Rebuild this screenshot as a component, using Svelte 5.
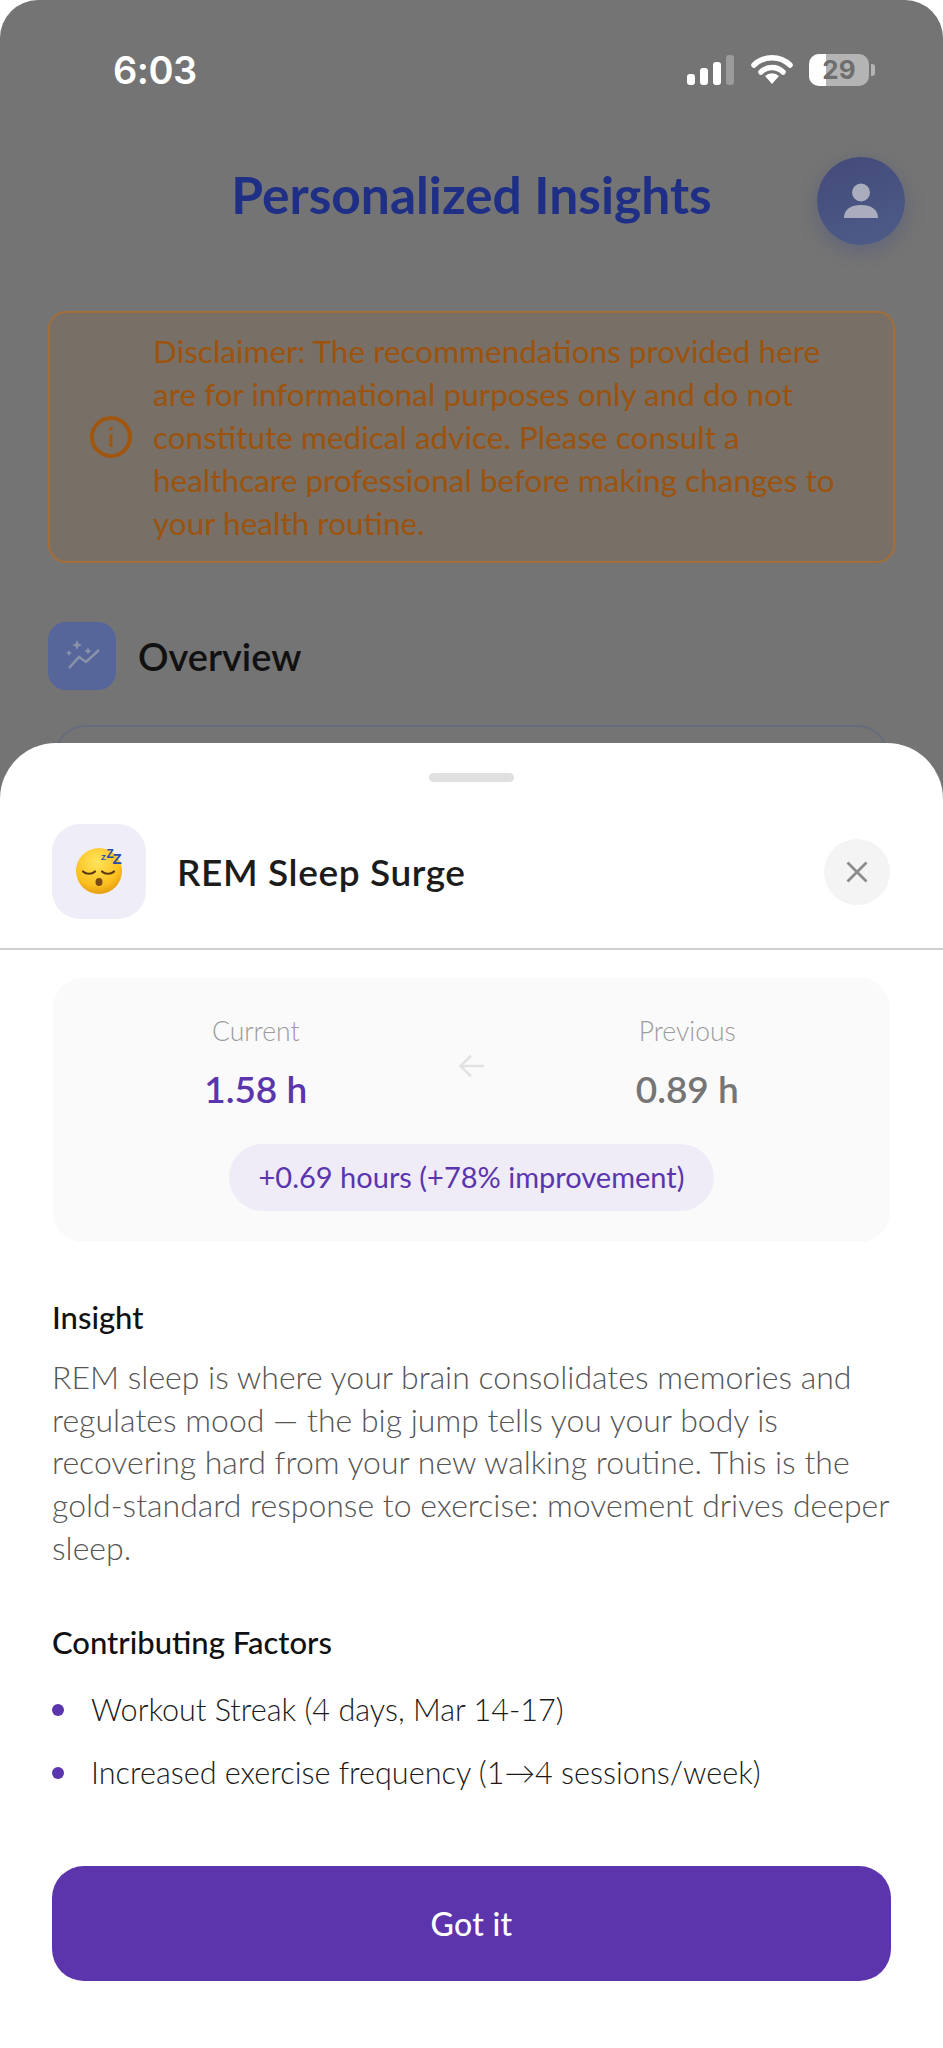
<script lang="ts">
  const disclaimer = 'Disclaimer: The recommendations provided here are for informational purposes only and do not constitute medical advice. Please consult a healthcare professional before making changes to your health routine.';
  const insight = 'REM sleep is where your brain consolidates memories and regulates mood — the big jump tells you your body is recovering hard from your new walking routine. This is the gold-standard response to exercise: movement drives deeper sleep.';
  const factors = ['Workout Streak (4 days, Mar 14-17)', 'Increased exercise frequency (1→4 sessions/week)'];
</script>

<div class="phone">
  <div class="screen">
    <div class="status">
      <span class="time">6:03</span>
      <div class="status-icons">
        <svg width="47" height="30" viewBox="0 0 47 30">
          <rect x="0" y="19" width="8" height="11" rx="3" fill="#fff" />
          <rect x="13" y="13" width="8" height="17" rx="3" fill="#fff" />
          <rect x="26" y="7" width="8" height="23" rx="3" fill="#fff" />
          <rect x="39" y="0" width="8" height="30" rx="3" fill="#9b9b9b" />
        </svg>
        <svg width="42" height="30" viewBox="0 0 42 30">
          <path d="M3 10a26 26 0 0 1 36 0M10 17a16 16 0 0 1 22 0" fill="none" stroke="#fff" stroke-width="5.5" stroke-linecap="round" />
          <path d="M14 21a10 10 0 0 1 14 0l-7 8z" fill="#fff" />
        </svg>
        <div class="battery">
          <span class="battery-fill"></span>
          <span class="battery-num">29</span>
          <span class="battery-cap"></span>
        </div>
      </div>
    </div>

    <div class="top">
      <h1>Personalized Insights</h1>
      <div class="avatar">
        <svg width="36" height="36" viewBox="0 0 36 36">
          <circle cx="18" cy="9.500" r="9" fill="#a9adbd" />
          <path d="M1 35c0-9 7-13 17-13s17 4 17 13z" fill="#a9adbd" />
        </svg>
      </div>
    </div>

    <div class="notice">
      <svg class="notice-icon" width="42" height="42" viewBox="0 0 42 42">
        <circle cx="21" cy="21" r="19" fill="none" stroke="#a0560f" stroke-width="4" />
        <rect x="19.5" y="18" width="3" height="13" fill="#a0560f" />
        <rect x="19.5" y="11" width="3" height="3.500" fill="#a0560f" />
      </svg>
      <p>{disclaimer}</p>
    </div>

    <div class="overview">
      <div class="overview-icon">
        <svg width="40" height="40" viewBox="0 0 40 40">
          <path d="M7 32l10-11 7 5 13-12" fill="none" stroke="#8a92aa" stroke-width="2.500" />
          <path d="M15 4l1.500 3.500L20 9l-3.500 1.500L15 14l-1.500-3.500L10 9l3.500-1.500zM26 11.500l1.200 2.300 2.300 1.200-2.300 1.200-1.200 2.300-1.200-2.300-2.300-1.200 2.300-1.200zM7 14l1 2 2 1-2 1-1 2-1-2-2-1 2-1z" fill="#8a92aa" />
        </svg>
      </div>
      <span>Overview</span>
    </div>

    <div class="peek"></div>
  </div>

  <div class="sheet">
    <div class="handle"></div>
    <div class="sheet-head">
      <div class="emoji-tile">
        <svg width="50" height="50" viewBox="0 0 50 50">
          <defs>
            <radialGradient id="face" cx="0.45" cy="0.3" r="0.8">
              <stop offset="0" stop-color="#ffe55c" />
              <stop offset="0.65" stop-color="#fbbf1e" />
              <stop offset="1" stop-color="#d98a0c" />
            </radialGradient>
          </defs>
          <circle cx="25" cy="24" r="23" fill="url(#face)" />
          <path d="M9 24.500c3 3 9 3 12 0M28 24.500c3 3 9 3 12 0" fill="none" stroke="#5c3a10" stroke-width="2.200" stroke-linecap="round" />
          <ellipse cx="25" cy="35" rx="3.500" ry="4" fill="#7a4a12" />
          <text x="27" y="12.500" class="zz z1">Z</text>
          <text x="32.500" y="10.500" class="zz z2">Z</text>
          <text x="38.500" y="16.500" class="zz z3">Z</text>
        </svg>
      </div>
      <h2>REM Sleep Surge</h2>
      <button class="close" aria-label="Close">
        <svg width="22" height="22" viewBox="0 0 22 22">
          <path d="M1.500 1.500l19 19M20.500 1.500l-19 19" stroke="#8c8c8c" stroke-width="2.800" fill="none" />
        </svg>
      </button>
    </div>

    <div class="sheet-body">
      <div class="compare">
        <div class="compare-row">
          <div class="stat">
            <span class="stat-label">Current</span>
            <strong class="stat-val now">1.58 h</strong>
          </div>
          <svg class="arrow" width="26" height="24" viewBox="0 0 26 24">
            <path d="M25 12H2M12 1.500L1.500 12 12 22.500" fill="none" stroke="#e2e2e2" stroke-width="2.500" />
          </svg>
          <div class="stat">
            <span class="stat-label">Previous</span>
            <strong class="stat-val">0.89 h</strong>
          </div>
        </div>
        <div class="delta">+0.69 hours (+78% improvement)</div>
      </div>

      <h3>Insight</h3>
      <p class="insight">{insight}</p>

      <h3 class="factors-head">Contributing Factors</h3>
      <ul>
        {#each factors as f}
          <li>{f}</li>
        {/each}
      </ul>

      <button class="got-it">Got it</button>
    </div>
  </div>
</div>

<style>
  :global(body) { margin: 0; background: #fff; }

  .phone {
    position: relative;
    width: 943px;
    height: 2048px;
    overflow: hidden;
    font-family: "Lato", "Open Sans", sans-serif;
    background: #fff;
  }

  .screen {
    height: 2048px;
    background: #747474;
    border-radius: 38px 38px 0 0;
    padding: 0 48px;
    box-sizing: border-box;
    overflow: hidden;
  }

  .status {
    display: flex;
    justify-content: space-between;
    align-items: center;
    height: 30px;
    padding: 55px 24px 0 65px;
    margin-right: -4px;
  }

  .time {
    font-family: "Inter", sans-serif;
    font-weight: 600;
    font-size: 38px;
    color: #fff;
    letter-spacing: -0.5px;
  }

  .status-icons { display: flex; align-items: center; gap: 17px; }

  .battery {
    position: relative;
    width: 60px;
    height: 32px;
    margin-right: 6px;
    background: #b4b4b4;
    border-radius: 10px;
    margin-left: -1px;
  }

  .battery-fill {
    position: absolute;
    left: 0;
    top: 0;
    width: 17px;
    height: 32px;
    background: #fff;
    border-radius: 10px 0 0 10px;
  }

  .battery-num {
    position: absolute;
    inset: 0;
    text-align: center;
    font-family: "Inter", sans-serif;
    font-weight: 700;
    font-size: 26px;
    line-height: 32px;
    color: #6e6e6e;
  }

  .battery-cap {
    position: absolute;
    right: -6px;
    top: 10px;
    width: 4px;
    height: 12px;
    background: #b4b4b4;
    border-radius: 0 3px 3px 0;
  }

  .top {
    display: flex;
    align-items: center;
    justify-content: center;
    position: relative;
    height: 88px;
    margin-top: 72px;
  }

  h1 {
    margin: 0 0 14px;
    font-size: 51.500px;
    font-weight: 700;
    color: #1f2f85;
  }

  .avatar {
    position: absolute;
    right: -10px;
    top: 0;
    width: 88px;
    height: 88px;
    border-radius: 50%;
    background: linear-gradient(160deg, #434a79, #4e5c88);
    box-shadow: 0 6px 18px rgba(70, 82, 130, 0.45);
    display: flex;
    align-items: center;
    justify-content: center;
  }

  .notice {
    display: flex;
    align-items: center;
    gap: 21px;
    margin-top: 66px;
    height: 252px;
    box-sizing: border-box;
    padding: 0 40px 0 40px;
    background: #786f66;
    border: 2px solid #a26e3a;
    border-radius: 18px;
  }

  .notice-icon { flex: none; }

  .notice p {
    margin: 0;
    font-size: 31.500px;
    font-weight: 400;
    line-height: 43px;
    color: #9c530d;
  }

  .overview {
    display: flex;
    align-items: center;
    gap: 22px;
    margin-top: 59px;
    font-size: 38px;
    font-weight: 600;
    color: #111;
  }

  .overview-icon {
    width: 68px;
    height: 68px;
    border-radius: 18px;
    background: #56659a;
    display: flex;
    align-items: center;
    justify-content: center;
  }

  .peek {
    height: 60px;
    margin: 35px 6px 0;
    border: 2px solid #676c7d;
    border-radius: 40px;
  }

  .sheet {
    position: absolute;
    left: 0;
    right: 0;
    top: 743px;
    bottom: 0;
    background: #fff;
    border-radius: 56px 56px 0 0;
  }

  .handle {
    width: 85px;
    height: 9px;
    margin: 30px auto 0;
    border-radius: 5px;
    background: #e0e0e0;
  }

  .sheet-head {
    display: flex;
    align-items: center;
    height: 168px;
    box-sizing: border-box;
    padding: 13px 53px 0 52px;
    border-bottom: 2px solid #cfcfcf;
  }

  .emoji-tile {
    width: 94px;
    height: 95px;
    border-radius: 28px;
    background: #efedf7;
    display: flex;
    align-items: center;
    justify-content: center;
    flex: none;
  }

  .zz { font-family: "Liberation Sans", sans-serif; font-weight: 700; fill: #2a4aa8; }
  .z1 { font-size: 8px; }
  .z2 { font-size: 12px; }
  .z3 { font-size: 15px; }

  h2 {
    margin: 0 0 0 31px;
    flex: 1;
    font-size: 37px;
    font-weight: 600;
    letter-spacing: 0.6px;
    color: #1c1c1c;
  }

  .close {
    width: 66px;
    height: 66px;
    border: 0;
    padding: 0;
    border-radius: 50%;
    background: #f4f4f4;
    display: flex;
    align-items: center;
    justify-content: center;
  }

  .sheet-body { padding: 28px 52px 0 52px; }

  .compare {
    height: 264px;
    margin: 0 1px 0 1px;
    border-radius: 30px;
    background: #fafafa;
    box-sizing: border-box;
    padding-top: 38px;
    display: flex;
    flex-direction: column;
    align-items: center;
  }

  .compare-row {
    display: grid;
    grid-template-columns: 1fr 26px 1fr;
    align-items: center;
    width: 100%;
  }

  .arrow { margin-top: 3px; }

  .stat { display: flex; flex-direction: column; align-items: center; gap: 20px; }
  .stat-label { font-size: 26.500px; font-weight: 300; line-height: 30px; color: #9c9c9c; }
  .stat-val { font-size: 37px; font-weight: 600; line-height: 46px; color: #757575; }
  .stat-val.now { color: #5b35ad; }

  .delta {
    margin-top: 32px;
    height: 67px;
    line-height: 65px;
    padding: 0 30px;
    border-radius: 34px;
    background: #efecf7;
    color: #5b35ad;
    font-size: 29px;
  }

  h3 {
    margin: 55px 0 0;
    font-size: 31px;
    font-weight: 500;
    line-height: 40px;
    color: #111;
  }

  .insight {
    margin: 19px 0 0;
    font-size: 32px;
    font-weight: 300;
    line-height: 42.7px;
    color: #555;
  }

  .factors-head { margin-top: 52px; }

  ul { list-style: none; margin: 27px 0 0; padding: 0; }

  li {
    position: relative;
    padding-left: 39px;
    font-size: 30.600px;
    font-weight: 300;
    line-height: 42px;
    margin-bottom: 21px;
    color: #1a1a1a;
  }

  li::before {
    content: "";
    position: absolute;
    left: 0;
    top: 15px;
    width: 12px;
    height: 12px;
    border-radius: 50%;
    background: #5b35ad;
  }

  .got-it {
    display: block;
    width: 839px;
    height: 115px;
    margin-top: 72px;
    border: 0;
    border-radius: 32px;
    background: #5c34ab;
    color: #fff;
    font-family: inherit;
    font-size: 32px;
    font-weight: 500;
    letter-spacing: 0.3px;
  }
</style>
